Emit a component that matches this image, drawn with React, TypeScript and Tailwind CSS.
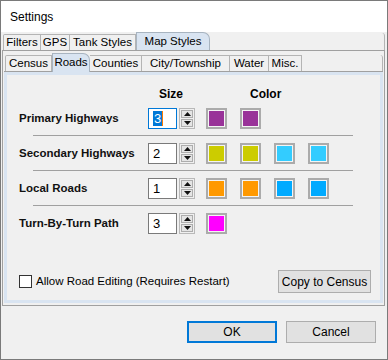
import React from 'react';

const font = { fontFamily: '"Liberation Sans", Arial, sans-serif' };

const Tab = ({ label, w, active, first }: { label: string; w: number; active?: boolean; first?: boolean }) => (
    <div
        style={{ width: w }}
        className={
            active
                ? 'h-[19px] -mb-px flex items-center justify-center bg-[#d9e4f1] border border-b-0 border-[#a8b4c0] rounded-tr-[7px] text-[11.5px] text-black'
                : `h-[16px] flex items-center justify-center border-t border-r border-[#b4b4b4] ${first ? 'border-l rounded-tl-[2px]' : ''} text-[11.5px] text-black`
        }
    >
        {label}
    </div>
);

const Arrow = ({ down }: { down?: boolean }) => (
    <svg width="7" height="4" viewBox="0 0 7 4">
        <path d={down ? 'M0 0 L7 0 L3.5 4 Z' : 'M3.5 0 L7 4 L0 4 Z'} fill="#111" />
    </svg>
);

const Spinner = ({ value, focused }: { value: string; focused?: boolean }) => (
    <div className="flex items-center gap-[2px] h-[21px]">
        <div
            className={`w-[29px] h-[21px] bg-white border flex items-center pl-[4px] text-[13px] ${focused ? 'border-[#0078d7]' : 'border-[#7a7a7a]'}`}
        >
            {focused ? (
                <span className="flex items-center">
                    <span className="bg-[#0078d7] text-white leading-[15px] px-px">{value}</span>
                    <span className="w-px h-[15px] bg-[#ff7a00]" />
                </span>
            ) : (
                <span>{value}</span>
            )}
        </div>
        <div className="w-[16px] h-[21px] border border-[#b9b9b9] bg-[#f0f0f0] flex flex-col gap-px p-px">
            <div className="flex-1 border border-[#adadad] bg-[#e5e5e5] flex items-center justify-center">
                <Arrow />
            </div>
            <div className="flex-1 border border-[#adadad] bg-[#e5e5e5] flex items-center justify-center">
                <Arrow down />
            </div>
        </div>
    </div>
);

const Swatch = ({ color }: { color: string }) => (
    <div className="w-[21px] h-[21px] border-2 border-[#ababab] p-px bg-[#f4f4f4]">
        <div className="w-full h-full" style={{ background: color }} />
    </div>
);

const Row = ({ label, value, colors, focused }: { label: string; value: string; colors: string[]; focused?: boolean }) => (
    <div className="flex items-center h-[21px]">
        <div className="w-[129px] text-[11.5px] font-bold text-[#111]">{label}</div>
        <Spinner value={value} focused={focused} />
        <div className="flex gap-[13px] ml-[11px]">
            {colors.map((c, i) => (
                <Swatch key={i} color={c} />
            ))}
        </div>
    </div>
);

const Sep = () => <div className="ml-[14px] w-[320px] h-px bg-[#a0a0a0] mt-[6px] mb-[7px]" />;

const Button = ({ label, w, primary }: { label: string; w: number; primary?: boolean }) => (
    <div
        style={{ width: w }}
        className={`h-[22px] flex items-center justify-center text-[12px] bg-[#e1e1e1] ${primary ? 'border-2 border-[#0078d7]' : 'border border-[#adadad]'}`}
    >
        {label}
    </div>
);

export default function App() {
    return (
        <div style={font} className="w-[388px] h-[360px] border border-[#7a7a7a] bg-[#f0f0f0] flex flex-col text-black">
            <div className="h-[31px] bg-white flex items-center pl-[9px] text-[12px]">Settings</div>

            <div className="ml-px mr-[2px] flex flex-col">
                <div className="h-[18px] flex items-end pl-px">
                    <Tab label="Filters" w={38} first />
                    <Tab label="GPS" w={29} />
                    <Tab label="Tank Styles" w={66} />
                    <Tab label="Map Styles" w={74} active />
                    <div className="flex-1 h-[17px] border-r border-[#b4b4b4] rounded-tr-[3px]" />
                </div>

                <div className="border border-[#a0a0a0] pb-[2px] px-px">
                    <div className="h-[20px] flex items-end pl-px">
                        <Tab label="Census" w={47} first />
                        <Tab label="Roads" w={38} active />
                        <Tab label="Counties" w={52} />
                        <Tab label="City/Township" w={88} />
                        <Tab label="Water" w={39} />
                        <Tab label="Misc." w={33} />
                        <div className="flex-1 h-[16px] border-r border-[#b4b4b4] rounded-tr-[3px]" />
                    </div>

                    <div className="border-t border-[#a0a0a0]">
                        <div className="border-[3px] border-[#d9e4f1] h-[231px] flex flex-col pl-[12px] pt-[10px]">
                            <div className="flex h-[17px] items-center text-[12px] font-bold">
                                <div className="w-[129px]" />
                                <div className="w-[46px] text-center">Size</div>
                                <div className="ml-[56px]">Color</div>
                            </div>

                            <div className="mt-[6px] flex flex-col">
                                <Row label="Primary Highways" value="3" focused colors={['#993399', '#993399']} />
                                <Sep />
                                <Row label="Secondary Highways" value="2" colors={['#cccc00', '#cccc00', '#33ccff', '#33ccff']} />
                                <Sep />
                                <Row label="Local Roads" value="1" colors={['#ff9900', '#ff9900', '#00aaff', '#00aaff']} />
                                <Sep />
                                <Row label="Turn-By-Turn Path" value="3" colors={['#ff00ff']} />
                            </div>

                            <div className="mt-[36px] flex items-center justify-between pr-[9px]">
                                <div className="flex items-center gap-[4px] text-[11.5px]">
                                    <div className="w-[13px] h-[13px] bg-white border border-[#333]" />
                                    <span>Allow Road Editing (Requires Restart)</span>
                                </div>
                                <div className="w-[93px] h-[23px] flex items-center justify-center text-[12px] bg-[#e1e1e1] border border-[#adadad]">
                                    Copy to Census
                                </div>
                            </div>
                        </div>
                    </div>
                </div>
            </div>

            <div className="flex justify-end gap-[9px] mt-[15px] pr-[11px]">
                <Button label="OK" w={90} primary />
                <Button label="Cancel" w={90} />
            </div>
        </div>
    );
}
